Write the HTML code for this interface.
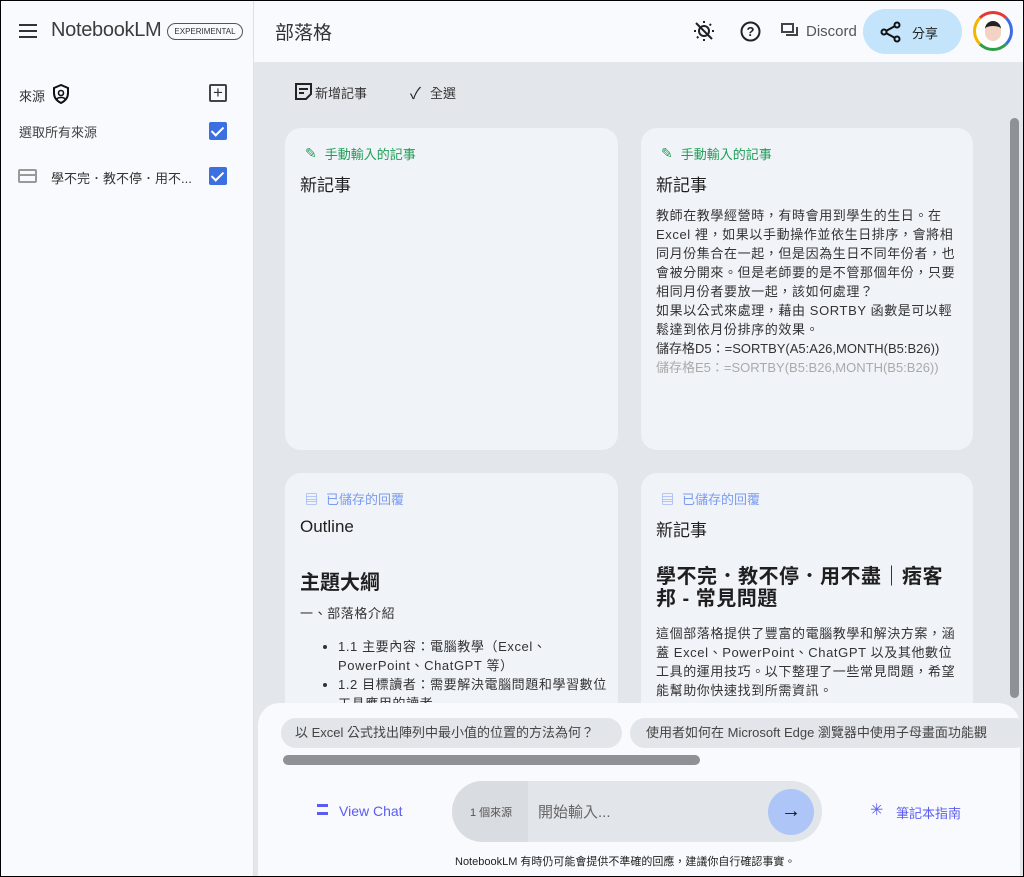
<!DOCTYPE html>
<html><head><meta charset="utf-8"><style>
*{box-sizing:border-box;margin:0;padding:0}
body{width:1024px;height:877px;overflow:hidden;font-family:"Liberation Sans","Noto Sans CJK TC",sans-serif;background:#e3e6eb;position:relative;color:#1f1f1f}
.frame{position:absolute;inset:0;border:1px solid #000;pointer-events:none;z-index:50}
.side{position:absolute;left:0;top:0;width:254px;height:877px;background:#f8fafd;border-right:1px solid #dde1e6}
.top{position:absolute;left:254px;top:0;right:0;height:62px;background:#f8fafd}
.abs{position:absolute}
.card{position:absolute;background:#f0f3f8;border-radius:16px}
.lbl{font-size:13px;display:flex;align-items:center;gap:8px}
.cb{position:absolute;width:18px;height:18px;background:#3c6fe0;border-radius:2px}
.cb:after{content:"";position:absolute;left:5px;top:2px;width:5px;height:10px;border:solid #fff;border-width:0 2px 2px 0;transform:rotate(45deg)}
.body{font-size:13px;line-height:19px;color:#333;letter-spacing:0.6px}
</style></head><body>
<div class="frame"></div>
<div class="side">
  <div class="abs" style="left:19px;top:24px;width:18px;height:14px;border-top:2px solid #333;border-bottom:2px solid #333"><div style="margin-top:4px;height:2px;background:#333"></div></div>
  <div class="abs" style="left:51px;top:19px;font-size:20px;color:#3c3c3c;letter-spacing:-0.3px">NotebookLM</div>
  <div class="abs" style="left:167px;top:23px;width:76px;height:17px;border:1px solid #555;border-radius:9px;font-size:8px;text-align:center;line-height:15px;color:#333">EXPERIMENTAL</div>
  <div class="abs" style="left:19px;top:86px;font-size:13px;color:#333">來源</div>
  <svg class="abs" style="left:52px;top:84px" width="18" height="20" viewBox="0 0 18 20"><path d="M9 1L2 4v5c0 5 3 8 7 10 4-2 7-5 7-10V4z" fill="none" stroke="#111" stroke-width="2"/><circle cx="9" cy="9" r="2.5" fill="none" stroke="#111" stroke-width="1.6"/><path d="M5 15c1-2 7-2 8 0" stroke="#111" stroke-width="1.6" fill="none"/></svg>
  <div class="abs" style="left:209px;top:84px;width:18px;height:18px;border:2px solid #444;border-radius:2px;text-align:center;line-height:13px;font-size:17px;color:#333">+</div>
  <div class="abs" style="left:19px;top:122px;font-size:13px;color:#444">選取所有來源</div>
  <div class="cb" style="left:209px;top:122px"></div>
  <div class="abs" style="left:18px;top:169px;width:19px;height:14px;border:2px solid #999;border-radius:2px"><div style="margin-top:3px;height:2px;background:#999"></div></div>
  <div class="abs" style="left:51px;top:168px;font-size:13px;color:#333">學不完．教不停．用不...</div>
  <div class="cb" style="left:209px;top:167px"></div>
</div>
<div class="top">
  <div class="abs" style="left:21px;top:18px;font-size:19px;color:#333">部落格</div>
  <svg class="abs" style="left:438px;top:19px" width="24" height="24" viewBox="0 0 24 24" fill="none" stroke="#222" stroke-width="2"><circle cx="12" cy="12" r="5"/><path d="M12 2v2M12 20v2M2 12h2M20 12h2M5 5l1.4 1.4M17.6 17.6L19 19M5 19l1.4-1.4M17.6 6.4L19 5M4 4l16 16"/></svg>
  <svg class="abs" style="left:486px;top:21px" width="21" height="21" viewBox="0 0 21 21"><circle cx="10.5" cy="10.5" r="9" fill="none" stroke="#222" stroke-width="2"/><text x="10.5" y="15" font-size="13" text-anchor="middle" font-family="Liberation Sans" font-weight="bold" fill="#222">?</text></svg>
  <svg class="abs" style="left:527px;top:23px" width="18" height="16" viewBox="0 0 18 16" fill="none" stroke="#444" stroke-width="2"><path d="M1 1h11v8H1z M5 12h11V4"/></svg>
  <div class="abs" style="left:552px;top:23px;font-size:15px;color:#555">Discord</div>
  <div class="abs" style="left:609px;top:9px;width:99px;height:45px;background:#c3e4fb;border-radius:23px"></div>
  <svg class="abs" style="left:626px;top:21px" width="22" height="22" viewBox="0 0 22 22" fill="none" stroke="#111" stroke-width="2"><circle cx="17" cy="4" r="2.5"/><circle cx="4" cy="11" r="2.5"/><circle cx="17" cy="18" r="2.5"/><path d="M6 10l9-5M6 12l9 5"/></svg>
  <div class="abs" style="left:658px;top:23px;font-size:13px;color:#222">分享</div>
  <div class="abs" style="left:719px;top:11px;width:40px;height:40px;border-radius:50%;border:3px solid;border-color:#e53935 #3b6fe0 #2e9e48 #f5b400;background:#fff"><div style="margin:7px auto 0;width:16px;height:20px;border-radius:8px;background:#f2d3c4;border-top:5px solid #222"></div></div>
</div>
<svg class="abs" style="left:295px;top:83px" width="17" height="17" viewBox="0 0 17 17" fill="none" stroke="#222" stroke-width="2"><path d="M1 1h15v10l-5 5H1z M4 6h9M4 10h5"/></svg>
<div class="abs" style="left:315px;top:83px;font-size:13px;color:#333">新增記事</div>
<div class="abs" style="left:410px;top:80px;font-size:16px;color:#222">✓</div>
<div class="abs" style="left:430px;top:83px;font-size:13px;color:#333">全選</div>
<div class="card" style="left:285px;top:128px;width:333px;height:322px">
  <div class="lbl abs" style="left:20px;top:16px;color:#1e9e55"><span style="font-size:14px">✎</span>手動輸入的記事</div>
  <div class="abs" style="left:15px;top:43px;font-size:17px">新記事</div>
</div>
<div class="card" style="left:641px;top:128px;width:332px;height:322px">
  <div class="lbl abs" style="left:20px;top:16px;color:#1e9e55"><span style="font-size:14px">✎</span>手動輸入的記事</div>
  <div class="abs" style="left:15px;top:43px;font-size:17px">新記事</div>
  <div class="abs body" style="left:15px;top:78px;width:305px">教師在教學經營時，有時會用到學生的生日。在Excel 裡，如果以手動操作並依生日排序，會將相同月份集合在一起，但是因為生日不同年份者，也會被分開來。但是老師要的是不管那個年份，只要相同月份者要放一起，該如何處理？<br>如果以公式來處理，藉由 SORTBY 函數是可以輕鬆達到依月份排序的效果。<br><span style="letter-spacing:0">儲存格D5：=SORTBY(A5:A26,MONTH(B5:B26))</span><br><span style="color:#aaa;letter-spacing:0">儲存格E5：=SORTBY(B5:B26,MONTH(B5:B26))</span></div>
</div>
<div class="card" style="left:285px;top:473px;width:333px;height:300px">
  <div class="lbl abs" style="left:20px;top:16px;color:#7b9bf0"><span style="font-size:13px">▤</span>已儲存的回覆</div>
  <div class="abs" style="left:15px;top:44px;font-size:17px">Outline</div>
  <div class="abs" style="left:15px;top:93px;font-size:20px;font-weight:bold">主題大綱</div>
  <div class="abs body" style="left:15px;top:131px">一、部落格介紹</div>
  <ul class="abs body" style="left:38px;top:164px;width:290px;padding-left:15px"><li>1.1 主要內容：電腦教學（Excel、PowerPoint、ChatGPT 等）</li><li>1.2 目標讀者：需要解決電腦問題和學習數位工具應用的讀者</li></ul>
</div>
<div class="card" style="left:641px;top:473px;width:332px;height:300px">
  <div class="lbl abs" style="left:20px;top:16px;color:#7b9bf0"><span style="font-size:13px">▤</span>已儲存的回覆</div>
  <div class="abs" style="left:15px;top:43px;font-size:17px">新記事</div>
  <div class="abs" style="left:15px;top:93px;width:300px;font-size:20px;font-weight:bold;line-height:22px;letter-spacing:0.5px">學不完．教不停．用不盡｜痞客邦 - 常見問題</div>
  <div class="abs body" style="left:15px;top:151px;width:305px">這個部落格提供了豐富的電腦教學和解決方案，涵蓋 Excel、PowerPoint、ChatGPT 以及其他數位工具的運用技巧。以下整理了一些常見問題，希望能幫助你快速找到所需資訊。</div>
</div>
<div class="abs" style="left:1010px;top:118px;width:9px;height:580px;background:#8e9196;border-radius:5px"></div>
<div class="abs" style="left:258px;top:703px;width:762px;height:174px;background:#f8fafd;border-radius:22px 22px 0 0;overflow:hidden">
  <div class="abs" style="left:23px;top:15px;width:341px;height:30px;background:#e2e5ea;border-radius:15px;font-size:13px;color:#444;line-height:30px;padding-left:14px">以 Excel 公式找出陣列中最小值的位置的方法為何？</div>
  <div class="abs" style="left:372px;top:15px;width:400px;height:30px;background:#e2e5ea;border-radius:15px;font-size:13px;color:#444;line-height:30px;padding-left:16px;white-space:nowrap;overflow:hidden">使用者如何在 Microsoft Edge 瀏覽器中使用子母畫面功能觀</div>
  <div class="abs" style="left:25px;top:52px;width:417px;height:10px;background:#8e9196;border-radius:5px"></div>
  <div class="abs" style="left:59px;top:101px;width:11px;height:11px;border-top:3px solid #5b5cf0;border-bottom:3px solid #5b5cf0"></div>
  <div class="abs" style="left:81px;top:100px;font-size:14px;color:#5b5cf0">View Chat</div>
  <div class="abs" style="left:194px;top:78px;width:370px;height:61px;background:#e2e5ea;border-radius:31px;overflow:hidden">
    <div class="abs" style="left:0;top:0;width:76px;height:61px;background:#d9dce1"></div>
    <div class="abs" style="left:18px;top:23px;font-size:11px;color:#555">1 個來源</div>
    <div class="abs" style="left:86px;top:20px;font-size:15px;color:#666">開始輸入...</div>
    <div class="abs" style="left:316px;top:8px;width:46px;height:46px;border-radius:50%;background:#adc6f7;text-align:center;line-height:44px;font-size:20px;color:#111">→</div>
  </div>
  <div class="abs" style="left:612px;top:97px;font-size:16px;color:#5b5cf0">✳</div>
  <div class="abs" style="left:638px;top:100px;font-size:13px;color:#5b5cf0">筆記本指南</div>
  <div class="abs" style="left:197px;top:150px;font-size:11px;color:#222">NotebookLM 有時仍可能會提供不準確的回應，建議你自行確認事實。</div>
</div>
</body></html>
